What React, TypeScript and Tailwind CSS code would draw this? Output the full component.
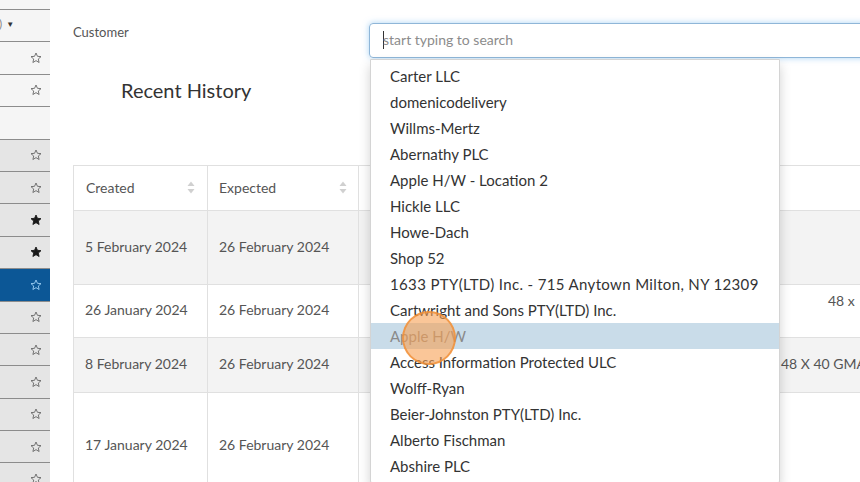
import React from "react";

type SideRow = "caret" | "star" | "filled" | "empty" | "active";

const sideRows: { kind: SideRow; dark: boolean }[] = [
  { kind: "caret", dark: false },
  { kind: "star", dark: false },
  { kind: "star", dark: false },
  { kind: "empty", dark: false },
  { kind: "star", dark: true },
  { kind: "star", dark: true },
  { kind: "filled", dark: true },
  { kind: "filled", dark: true },
  { kind: "active", dark: true },
  { kind: "star", dark: true },
  { kind: "star", dark: true },
  { kind: "star", dark: true },
  { kind: "star", dark: true },
  { kind: "star", dark: true },
  { kind: "star", dark: true },
];

const customers = [
  "Carter LLC",
  "domenicodelivery",
  "Willms-Mertz",
  "Abernathy PLC",
  "Apple H/W - Location 2",
  "Hickle LLC",
  "Howe-Dach",
  "Shop 52",
  "1633 PTY(LTD) Inc. - 715 Anytown Milton, NY 12309",
  "Cartwright and Sons PTY(LTD) Inc.",
  "Apple H/W",
  "Access Information Protected ULC",
  "Wolff-Ryan",
  "Beier-Johnston PTY(LTD) Inc.",
  "Alberto Fischman",
  "Abshire PLC",
];

const rows = [
  {
    created: "5 February 2024",
    expected: "26 February 2024",
    items: ["- Pallet wrap", "Banding strap", "Corner boards"],
    size: "",
    sizePad: false,
    h: "h-[74px]",
    bg: "bg-[#f3f3f3]",
  },
  {
    created: "26 January 2024",
    expected: "26 February 2024",
    items: ["- Wooden pallets", "Heat treated"],
    size: "48 x",
    sizePad: true,
    h: "h-[53px]",
    bg: "bg-white",
  },
  {
    created: "8 February 2024",
    expected: "26 February 2024",
    items: ["Wooden pallets"],
    size: "48 X 40 GMA",
    sizePad: false,
    h: "h-[55px]",
    bg: "bg-[#f3f3f3]",
  },
  {
    created: "17 January 2024",
    expected: "26 February 2024",
    items: ["Block pallets", "- Grade A", "Recycled", "Stacked"],
    size: "",
    sizePad: false,
    h: "h-[106px]",
    bg: "bg-white",
  },
];

function StarIcon({ filled, color }: { filled?: boolean; color: string }) {
  return (
    <svg width="12" height="12" viewBox="0 0 24 24">
      <polygon
        points="12,2 14.9,8.6 22,9.3 16.6,14 18.2,21 12,17.3 5.8,21 7.4,14 2,9.3 9.1,8.6"
        fill={filled ? color : "none"}
        stroke={color}
        strokeWidth="1.8"
        strokeLinejoin="round"
      />
    </svg>
  );
}

function SortIcon() {
  return (
    <svg width="8" height="13" viewBox="0 0 8 13" className="shrink-0">
      <polygon points="4,0.5 7.5,5 0.5,5" fill="#d0d0d0" />
      <polygon points="0.5,8 7.5,8 4,12.5" fill="#d0d0d0" />
    </svg>
  );
}

function Sidebar() {
  return (
    <div className="w-[50px] shrink-0 flex flex-col overflow-hidden bg-[#f5f5f5]">
      <div className="h-[10px] shrink-0 border-b border-[#8c8c8c]" />
      {sideRows.map((r, i) => (
        <div
          key={i}
          className={
            "h-[32.4px] shrink-0 border-b border-[#8c8c8c] flex items-center " +
            (r.kind === "active" ? "bg-[#0c5796]" : r.dark ? "bg-[#e5e5e5]" : "bg-[#f5f5f5]")
          }
        >
          {r.kind === "caret" ? (
            <div className="flex items-center text-[12px] text-[#888] -ml-px pb-[4px]">
              <span>)</span>
              <span className="ml-[4px] text-[8px] text-[#333]">▼</span>
            </div>
          ) : r.kind === "empty" ? null : (
            <div className="ml-auto mr-[8px] flex items-center">
              <StarIcon
                filled={r.kind === "filled"}
                color={r.kind === "active" ? "#9fd0f5" : r.kind === "filled" ? "#1a1a1a" : "#666"}
              />
            </div>
          )}
        </div>
      ))}
    </div>
  );
}

export default function App() {
  return (
    <div
      className="w-[860px] h-[482px] overflow-hidden flex bg-white"
      style={{ fontFamily: "Lato, 'Open Sans', sans-serif" }}
    >
      <Sidebar />
      <div className="flex-1 min-w-0 relative pl-[23px] pt-[23px]">
        <div className="flex items-start">
          <div className="w-[296px] shrink-0 text-[13px] leading-[18px] text-[#555]">Customer</div>
          <div className="relative w-[520px] shrink-0">
            <div className="h-[35px] rounded-[4px] border border-[#8fb6d8] shadow-[0_0_6px_rgba(102,175,233,0.55)] flex items-center pl-[13px] pb-[2px] text-[14px] text-[#8c8c8c]">
              <span className="w-px h-[18px] bg-[#333] -mr-px" />
              <span>start typing to search</span>
            </div>
            <div className="absolute left-px top-[36px] z-10 w-[410px] bg-white border border-[#d4d4d4] rounded-b-[3px] shadow-[0_6px_12px_rgba(0,0,0,0.18)] pt-[3px] pb-[4px]">
              {customers.map((c, i) => (
                <div
                  key={i}
                  className={
                    "h-[26px] flex items-center pl-[19px] text-[15px] " +
                    (c.startsWith("1633") ? "tracking-[0.35px] " : "") +
                    (c === "Apple H/W" ? "bg-[#c9dce9] text-[#8a8a8a]" : "text-[#333]")
                  }
                >
                  {c}
                </div>
              ))}
            </div>
          </div>
        </div>

        <div className="mt-[18px] pl-[48px] text-[20px] leading-[28px] text-[#333]">Recent History</div>

        <table className="mt-[61px] border-collapse table-fixed w-[896px] text-[14px] text-[#555]">
          <colgroup>
            <col className="w-[134px]" />
            <col className="w-[151px]" />
            <col className="w-[411px]" />
            <col className="w-[200px]" />
          </colgroup>
          <thead>
            <tr className="h-[45px]">
              <th className="border border-[#e0e0e0] font-normal text-left px-[12px] pb-[2px]">
                <div className="flex items-center justify-between">
                  <span>Created</span>
                  <SortIcon />
                </div>
              </th>
              <th className="border border-[#e0e0e0] font-normal text-left px-[11px] pb-[2px]">
                <div className="flex items-center justify-between">
                  <span>Expected</span>
                  <SortIcon />
                </div>
              </th>
              <th className="border border-[#e0e0e0] font-normal text-left px-[11px]" />
              <th className="border border-[#e0e0e0] font-normal text-left px-[11px]" />
            </tr>
          </thead>
          <tbody>
            {rows.map((r, i) => (
              <tr key={i} className={r.h + " " + r.bg}>
                <td className="border border-[#e0e0e0] px-[11px] pb-[3px] whitespace-nowrap">{r.created}</td>
                <td className="border border-[#e0e0e0] px-[11px] pb-[3px] whitespace-nowrap">{r.expected}</td>
                <td className="border border-[#e0e0e0] px-[11px] leading-[17px]">
                  {r.items.map((t, j) => (
                    <div key={j}>{t}</div>
                  ))}
                </td>
                <td className="border border-[#e0e0e0] px-[11px] pb-[3px] whitespace-nowrap">
                  <div className={r.sizePad ? "pl-[47px] -mt-[18px]" : ""}>{r.size}</div>
                </td>
              </tr>
            ))}
          </tbody>
        </table>

        <div className="absolute left-[352px] top-[311px] z-20 w-[54px] h-[54px] rounded-full bg-[rgba(246,160,84,0.6)] border-2 border-[rgba(240,140,50,0.75)]" />
      </div>
    </div>
  );
}
